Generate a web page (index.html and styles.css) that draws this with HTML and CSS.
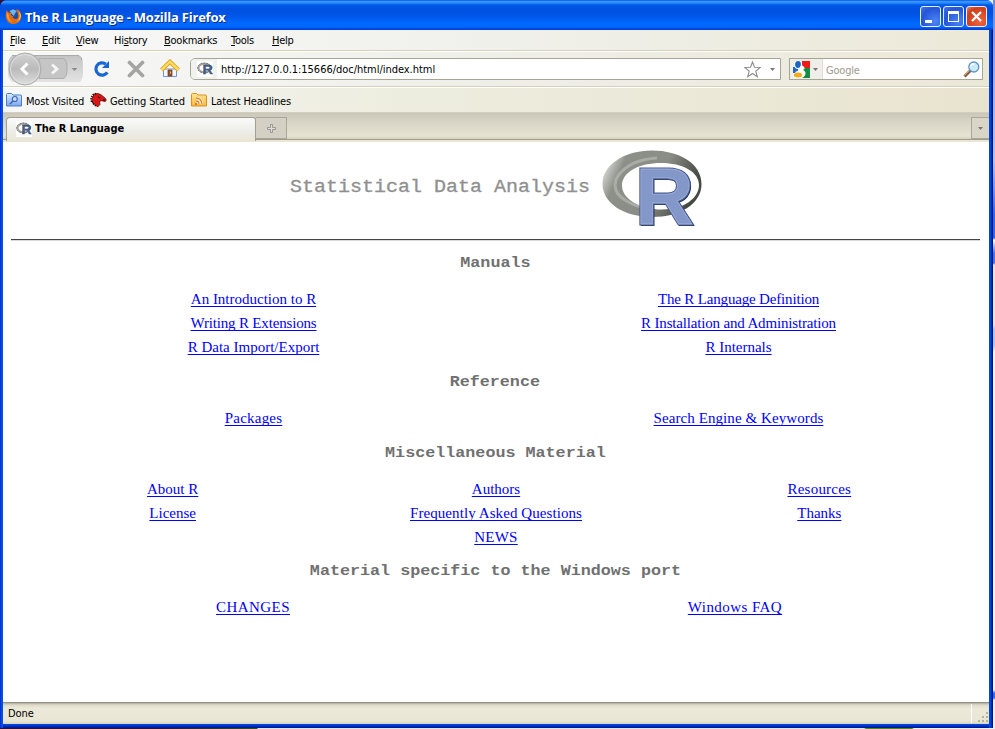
FILE: index.html
```html
<!DOCTYPE html>
<html lang="en">
<head>
<meta charset="utf-8">
<title>The R Language - Mozilla Firefox</title>
<link rel="stylesheet" href="styles.css">
</head>
<body>
<svg width="0" height="0" class="defs">
  <defs>
    <linearGradient id="ring" x1="0" y1="0" x2="1" y2=".3"><stop offset="0" stop-color="#777a72"/><stop offset=".12" stop-color="#c8cbc5"/><stop offset=".25" stop-color="#8d9088"/><stop offset=".65" stop-color="#8a8d85"/><stop offset="1" stop-color="#474a43"/></linearGradient>
    <linearGradient id="glass" x1="0" y1="0" x2="0" y2="1"><stop offset="0" stop-color="#d2d3d2"/><stop offset=".5" stop-color="#b9bab9"/><stop offset="1" stop-color="#dddedd"/></linearGradient>
    <linearGradient id="plate" x1="0" y1="0" x2="0" y2="1"><stop offset="0" stop-color="#c3c4c3"/><stop offset="1" stop-color="#e2e3e2"/></linearGradient>
    <linearGradient id="folder" x1="0" y1="0" x2="0" y2="1"><stop offset="0" stop-color="#dceafc"/><stop offset="1" stop-color="#7ba8e8"/></linearGradient>
    <linearGradient id="feed" x1="0" y1="0" x2="0" y2="1"><stop offset="0" stop-color="#ffe88e"/><stop offset="1" stop-color="#fbb63c"/></linearGradient>
    <symbol id="r-mini" viewBox="0 0 16 16">
      <path d="M0 0h16v16H0z" fill="#fff"/>
      <ellipse cx="7.500" cy="7" rx="6" ry="4.300" fill="none" stroke="#a3a6a2" stroke-width="2"/>
      <ellipse cx="7.500" cy="7" rx="7" ry="5" fill="none" stroke="#424641" stroke-width=".6" stroke-dasharray="2 1"/>
      <text x="5.500" y="13.400" class="r-mini-letter" textLength="10" lengthAdjust="spacingAndGlyphs">R</text>
    </symbol>
  </defs>
</svg>
<div class="desktop">
  <div class="window">
    <header class="titlebar">
      <svg class="fox" width="17" height="17" viewBox="0 0 17 17"><circle cx="8.500" cy="8.300" r="7" fill="#234ba0"/><path d="M4.500 3 8 1.200l4 1.800-2 2.200L9 8 6.800 6z" fill="#70b8e8"/><path d="M1.500 2.200 3.500 4.500l3.200.4L5.500 7l3 1.500-1.200 1.300 3 1.200c3 .2 3.500-3 2.300-6L11.400 1c5 1.400 6.200 8 3.300 12-3 4-9.500 4-12.200.2C.4 10.200.3 6 1.500 2.200z" fill="#e56b11"/><path d="M13.400 3.200c2.300 3.400 1.500 8.300-2.300 10.200 5.500-.8 6.300-7.500 2.300-10.200z" fill="#fbcb45"/><path d="M2 4.500c-1 4.500 1 8.800 5.600 9.600C4.800 12.500 3.500 10 3.800 7z" fill="#f9a12c"/></svg>
      <span class="window-title">The R Language - Mozilla Firefox</span>
      <div class="controls">
        <span class="control"><svg width="19" height="19"><path d="M4 13h7v3H4z" fill="#fff"/></svg></span>
        <span class="control"><svg width="19" height="19"><path d="M4 4h11v11H4zM5 7v7h9V7z" fill="#fff" fill-rule="evenodd"/></svg></span>
        <span class="control close"><svg width="19" height="19"><path d="m5 5 9 9m0-9-9 9" stroke="#fff" stroke-width="2.300"/></svg></span>
      </div>
    </header>
    <nav class="menu ui"><span><u>F</u>ile</span><span><u>E</u>dit</span><span><u>V</u>iew</span><span>Hi<u>s</u>tory</span><span><u>B</u>ookmarks</span><span><u>T</u>ools</span><span><u>H</u>elp</span></nav>
    <div class="navbar">
      <svg class="history" width="78" height="34" viewBox="0 0 78 34"><path d="M7 3.500h67q4 3 4 9v9q0 5-3 8.500H7q-4-3-4-9V12q0-5 4-8.500z" fill="url(#plate)"/><path d="M7 3.500h67q3 2 3 5" stroke="#9e9f9d" stroke-width=".8" fill="none"/><path d="M34 6.500h25q3 3 3 7v6q0 4-3 7H34z" fill="#c4c5c4" stroke="#adaead"/><circle cx="20" cy="17" r="16" fill="url(#glass)" stroke="#acacac"/><circle cx="20" cy="17" r="14.500" fill="none" stroke="#e4e4e4" opacity=".7"/><path d="m22.500 11.500-5.500 5.500 5.500 5.500" fill="none" stroke="#fff" stroke-width="3"/><path d="m47 12.500 5 4.500-5 4.500" fill="none" stroke="#f5f5f5" stroke-width="2.800"/><path d="M66.500 16h6l-3 3z" fill="#8b8c8b"/></svg>
      <svg class="reload" width="18" height="18" viewBox="0 0 18 18"><path d="M14.300 12.400A6.200 6.200 0 1 1 12.800 4" fill="none" stroke="#1766d4" stroke-width="3.200"/><path d="M9 8h7V1z" fill="#1766d4"/></svg>
      <svg class="stop" width="18" height="18" viewBox="0 0 18 18"><path d="m2.500 2.500 13 13m0-13-13 13" stroke="#a4a4a2" stroke-width="3.700" stroke-linecap="round"/></svg>
      <svg class="home" width="20" height="19" viewBox="0 0 20 19"><path d="M3.500 10h13v7.500h-13z" fill="#f3f7ff" stroke="#7694ce"/><path d="M1.500 11 10 2.700l8.500 8.300" fill="none" stroke="#d99a1f" stroke-width="4"/><path d="M1.500 11 10 2.700l8.500 8.300" fill="none" stroke="#ffdc54" stroke-width="2.500"/><path d="M8 11h4v6H8z" fill="#99512d" stroke="#693c27" stroke-width=".7"/><path d="M10 12.500h1v2h-1z" fill="#f2c08e"/></svg>
      <div class="address ui">
        <span class="site"><svg width="16" height="16"><use href="#r-mini"/></svg></span>
        <span class="url">http://127.0.0.1:15666/doc/html/index.html</span>
        <svg class="star" width="17" height="17" viewBox="0 0 17 17"><path d="m8.500 1 2 5.200 5.700.3-4.400 3.600 1.500 5.600-4.800-3.200-4.800 3.200 1.500-5.600L.8 6.500l5.700-.3z" fill="#fff" stroke="#8c8c8c" stroke-width="1.100"/></svg>
        <svg class="drop" width="5" height="3"><path d="M0 0h5L2.500 3z" fill="#777"/></svg>
      </div>
      <div class="search ui">
        <span class="engine"><svg width="17" height="17" viewBox="0 0 17 17"><path d="M9 0h8v7H9z" fill="#ee1b16"/><path d="M9 7h8v10H8z" fill="#178b41"/><path d="M0 6h5v6H0z" fill="#2467ca"/><path d="M0 12h7v5H0z" fill="#fff"/><ellipse cx="5" cy="3.500" rx="3.500" ry="4" fill="#1b62c8" stroke="#fff" stroke-width="1.200"/><path d="M8 4c5 2 4 4 2 5 4 2 3 6-1 8H6l-4-6 5-2z" fill="#fff"/><ellipse cx="5" cy="14" rx="4.200" ry="2.500" fill="#f2ac18"/></svg><svg width="5" height="3"><path d="M0 0h5L2.500 3z" fill="#777"/></svg></span>
        <span class="placeholder">Google</span>
        <svg width="17" height="17" viewBox="0 0 17 17"><path d="m7.500 9.500-6 6" stroke="#875d3f" stroke-width="3"/><path d="m6.500 9.500-5 5" stroke="#e0a060" stroke-width="1"/><circle cx="10.800" cy="6" r="5" fill="#c9e9fc" stroke="#5f94c4" stroke-width="1.300"/><path d="M7.500 5.500q1-3 4-2.700" fill="none" stroke="#fff" stroke-width="1.500"/></svg>
      </div>
    </div>
    <div class="bookmarks ui">
      <svg width="16" height="16" viewBox="0 0 16 16"><path d="M.5 2.500q0-1 1-1h4l1.500 1.500h7.500q1 0 1 1v10H.5z" fill="url(#folder)" stroke="#4c7ccb"/><circle cx="8.800" cy="7" r="2.500" fill="#c7defb" stroke="#3c66ba" stroke-width="1.200"/><path d="m7 9-3 3" stroke="#3c66ba" stroke-width="1.600"/></svg>
      <span class="most">Most Visited</span>
      <svg width="17" height="17" viewBox="0 0 17 17"><path d="M4.500 2 8 1.500l3 1.300 4 3.200 1.300 2-1 1.500-4-.8-1.800.8.500 3-2.500 2.500-2-2.500-2-.5L2 9l.5-4z" fill="#d91714" stroke="#650a0a" stroke-width=".8"/><path d="M1.500 10 1 6l2-3.500L6 1.500M2 9l1.500 3 3 2.500" fill="none" stroke="#290707" stroke-width="1.500" stroke-dasharray="1.500 1"/><path d="m8 5 2 1m3 2 2 0" stroke="#2d0805" stroke-width="1.200"/></svg>
      <span class="getting">Getting Started</span>
      <svg width="16" height="16" viewBox="0 0 16 16"><path d="M.5 2.500q0-1 1-1h4l1.500 1.500h7.500q1 0 1 1v10H.5z" fill="url(#feed)" stroke="#d79024"/><path d="M5 6q5 0 6 6M5 9q3 0 3 3" fill="none" stroke="#fff" stroke-width="2.700"/><path d="M5 6q5 0 6 6M5 9q3 0 3 3" fill="none" stroke="#e47a18" stroke-width="1.300"/><path d="M4 11h2v2H4z" fill="#e47a18"/></svg>
      <span class="latest">Latest Headlines</span>
    </div>
    <div class="tabs ui">
      <div class="tab"><svg width="16" height="16"><use href="#r-mini"/></svg><span>The R Language</span></div>
      <span class="new-tab"><svg width="9" height="9"><path d="M3.500.5h2v3h3v2h-3v3h-2v-3h-3v-2h3z" fill="#ddd" stroke="#8b8b86" stroke-width=".8"/></svg></span>
      <span class="tab-list"><svg width="5" height="3"><path d="M0 0h5L2.500 3z" fill="#777"/></svg></span>
    </div>
    <main class="page">
      <h1><span>Statistical Data Analysis</span>
        <svg class="r-large" width="102" height="78" viewBox="0 0 102 78"><path fill="url(#ring)" fill-rule="evenodd" d="M51 .500c-28 0-49.500 14.500-49.500 33.500S23 67 51 67s49.500-13 49.500-33S79 .500 51 .500zM60 13c22 0 38 9 38 22S83 59.500 61 59.500 21 49 21 35.500 38 13 60 13z"/><path d="M40 57C17 50 9 39 17 26 25 15 38 9 56 8" fill="none" stroke="#dfe3dc" stroke-width="3" opacity=".35"/>
        <g class="r-logo"><text x="35.500" y="75" fill="#202c49" stroke="#202c49" stroke-width="2" textLength="58" lengthAdjust="spacingAndGlyphs">R</text><text x="34.500" y="74" fill="#8397c8" stroke="#4b5d91" stroke-width="3" textLength="58" lengthAdjust="spacingAndGlyphs">R</text><text x="34.500" y="74" fill="#8397c8" stroke="#9fb0d9" stroke-width=".8" textLength="58" lengthAdjust="spacingAndGlyphs">R</text></g></svg>
      </h1>
      <hr>
      <h2><span>Manuals</span></h2>
      <div class="links two">
        <a href="#">An Introduction to R</a><a href="#" class="tight">The R Language Definition</a>
        <a href="#" class="tight">Writing R Extensions</a><a href="#" class="tight">R Installation and Administration</a>
        <a href="#">R Data Import/Export</a><a href="#">R Internals</a>
      </div>
      <h2><span>Reference</span></h2>
      <div class="links two"><a href="#" class="loose">Packages</a><a href="#" class="slack">Search Engine &amp; Keywords</a></div>
      <h2><span>Miscellaneous Material</span></h2>
      <div class="links three">
        <a href="#">About R</a><a href="#">Authors</a><a href="#" class="loose">Resources</a>
        <a href="#">License</a><a href="#" class="slack">Frequently Asked Questions</a><a href="#">Thanks</a>
        <a href="#" class="middle loose">NEWS</a>
      </div>
      <h2 class="port"><span>Material specific to the Windows port</span></h2>
      <div class="links port-links"><a href="#" class="wide">CHANGES</a><a href="#" class="wide">Windows FAQ</a></div>
    </main>
    <footer class="status ui"><span>Done</span><span class="grip"><svg width="17" height="18"><path d="M14 8h2v2h-2zM10 12h2v2h-2zM14 12h2v2h-2zM6 16h2v2H6zM10 16h2v2h-2zM14 16h2v2h-2z" fill="#b5b19d"/></svg></span></footer>
  </div>
  <div class="behind"></div>
</div>
</body>
</html>
```

FILE: styles.css
```css
* { box-sizing: border-box; }
body { margin: 0; overflow: hidden; background: #fff; }
svg { display: block; flex-shrink: 0; }
.defs { position: absolute; }
.desktop { width: 995px; height: 729px; display: flex; background: linear-gradient(90deg, #311038 0 160px, #345013 257px, #dce5fc 258px 864px, #58830e 866px 912px, #eef2fc 914px); }
.window {
  width: 993px; height: 728px; display: flex; flex-direction: column;
  padding: 0 4px 4px 3px; border-radius: 7px 7px 0 0;
  background:
    linear-gradient(90deg, #0023c8, #0059ee 2px, #0048e0 3px, transparent 3px calc(100% - 4px), #0044dc calc(100% - 4px), #0048e0 calc(100% - 2px), #00138c calc(100% - 1px)),
    linear-gradient(#0045e0 calc(100% - 3px), #0030bd calc(100% - 2px), #00138c);
}
.behind { width: 2px; height: 728px; background: linear-gradient(#6489df, #95b4f5 90px, #acc4ff 160px, #2b68e8 215px 238px, #fff 240px, #4773df 253px 263px, #e9e3cf 265px 325px, #abc6f7 330px 345px, #f0f4fc 352px 690px, #2b6ff0 693px 698px, #eee 700px); }
.ui { font: 11px/14px "DejaVu Sans Condensed", "DejaVu Sans", sans-serif; font-stretch: condensed; color: #000; white-space: nowrap; letter-spacing: -.35px; }
.titlebar {
  height: 30px; flex-shrink: 0; margin: 0 -4px 0 -3px; padding: 0 6px 0 5px;
  border-radius: 7px 7px 0 0; display: flex; align-items: center;
  background: linear-gradient(#0054e8 0, #3c95ff 1.500px, #268aff 3px, #0058e6 5px, #0051df 9px, #0056e8 16px, #0068ff 23px, #0068ff 27px, #0037cb 30px);
}
.fox { margin-top: 2px; }
.window-title { margin: 4px 0 0 3px; font: bold 13px/18px "Open Sans", "Noto Sans", sans-serif; letter-spacing: -.22px; color: #fff; text-shadow: 1px 1px #062c93; white-space: nowrap; }
.controls { display: flex; gap: 2px; margin: 3px 0 0 auto; }
.control { width: 21px; height: 21px; border: 1px solid #e9effe; border-radius: 3px; background: radial-gradient(circle at 75% 75%, #4c84f5, #2455d8 65%, #4876df); }
.close { background: radial-gradient(circle at 70% 75%, #ee6540, #ce3e1b 70%, #e58066); }
.menu { height: 22px; flex-shrink: 0; padding: 4px 7px 0; display: grid; grid-template-columns: 32px 34px 38px 50px 67px 41px 40px; background: linear-gradient(90deg, #f8f9f9, #f0f0eb 50%, #ece9d8); border-bottom: 1px solid #fff; box-shadow: inset 0 -1px #d6d0b9; letter-spacing: -.25px; }
.menu u { text-underline-offset: 1px; }
.navbar { height: 36px; flex-shrink: 0; padding-right: 6px; display: flex; align-items: center; background: linear-gradient(90deg, #f7f8f8, #efefe9 50%, #ece8d8); border-bottom: 1px solid #fff; box-shadow: inset 0 -1px #d6d0b9; }
.history { margin: -2px 0 0 2px; }
.reload { margin: -2px 0 0 10px; }
.stop { margin: -2px 0 0 16px; }
.home { margin: -2px 0 0 15px; }
.address { width: 591px; height: 22px; margin: -1px 0 0 10px; display: flex; align-items: center; background: #fff; border: 1px solid #a7a696; border-radius: 5px 0 0 5px; }
.site { width: 26px; height: 20px; padding: 2px 0 0 6px; border-radius: 4px 0 0 4px; background: #f1f1ed; }
.url { margin: 2px 0 0 4px; letter-spacing: -.03px; }
.star { margin-left: auto; }
.drop { margin: 1px 5px 0 9px; }
.search { width: 194px; height: 22px; margin: -1px 0 0 8px; padding-right: 2px; display: flex; align-items: center; background: #fff; border: 1px solid #a7a696; }
.engine { width: 33px; height: 20px; padding-left: 3px; display: flex; gap: 3px; align-items: center; background: #efeee9; border-right: 1px solid #ddd; }
.placeholder { margin: 3px auto 0 3px; color: #9d9a8e; letter-spacing: -.2px; }
.bookmarks { height: 24px; flex-shrink: 0; padding: 0 3px; display: flex; align-items: center; background: linear-gradient(90deg, #f6f7f7, #ededdf 40%, #e9e4d0); letter-spacing: -.17px; }
.bookmarks span { padding-top: 3px; }
.most { width: 64px; margin-left: 4px; }
.getting { width: 81px; margin-left: 3px; letter-spacing: -.1px; }
.latest { margin-left: 4px; }
.tabs { height: 30px; flex-shrink: 0; padding: 4px 0 0 3px; display: flex; background: linear-gradient(#cac6b8, #d8d5c6 9px, #e6e3d3 23px, #d5d1c0 26px, #9e9d8e 26px 27px, #e9e6d5 27px 29px, #a7a596 29px); border-top: 1px solid #d3cebd; }
.tab { width: 250px; height: 24px; padding: 0 0 1px 9px; display: flex; align-items: center; border: 1px solid #a09f91; border-bottom: 0; border-radius: 4px 3px 0 0; font-weight: bold; background: linear-gradient(#fafafa, #eeeeea 12px, #e9e6d6); letter-spacing: -.03px; }
.tab span { margin: 0 0 0 3px; }
.new-tab { width: 31px; height: 22px; display: grid; place-items: center; border: 1px solid #a9a799; border-left: 0; background: #d4d1c4; }
.tab-list { width: 18px; height: 22px; margin-left: auto; display: grid; place-items: center; border: 1px solid #a9a799; border-right: 0; background: #d9d6c8; }
.page { flex: 1; padding: 8px; background: #fff; text-align: center; font-family: "Liberation Serif", serif; width: 986px; }
h1 { height: 78px; margin: 0; display: flex; justify-content: center; gap: 11px; font: 18px/24px "Liberation Mono", monospace; color: #909090; }
h1 span { margin-top: 25px; width: 300px; text-align: left; white-space: nowrap; transform: scaleX(1.111); transform-origin: left; -webkit-text-stroke: .3px #909090; }
.r-large { overflow: visible; }
hr { width: 969px; height: 2px; margin: 11px 0 13px; border: 0; border-top: 1px solid #444; border-bottom: 1px solid #d9d9d6; }
h2 { margin: 0 0 15px; height: 18px; font: bold 14px/18px "Liberation Mono", monospace; color: #707070; padding-right: 2px; }
h2 span { display: inline-block; transform: scaleX(1.194); }
.links { display: grid; justify-items: center; margin-bottom: 14px; font-size: 15px; line-height: 24px; }
.two { grid-template-columns: repeat(2, 1fr); }
.three { grid-template-columns: repeat(3, 1fr); }
.port { margin-top: -1px; }
.port-links { grid-template-columns: 484px 480px; }
.middle { grid-column: 2; }
.tight { letter-spacing: -.17px; }
.slack { letter-spacing: .08px; }
.loose { letter-spacing: .23px; }
.wide { letter-spacing: .43px; }
a { color: #00f; text-decoration: underline; text-underline-offset: 2px; text-decoration-skip-ink: none; text-decoration-thickness: 1px; }
.status { height: 22px; flex-shrink: 0; padding-left: 5px; display: flex; justify-content: space-between; background: linear-gradient(#b0ad9e, #dfdac8 2px, #ece9d8 5px, #e9e6d5 18px, #d6d3ba); border-top: 1px solid #929184; }
.status > span:first-child { margin-top: 4px; letter-spacing: -.1px; }
.grip { width: 18px; height: 19px; margin-top: 1px; border-left: 1px solid #fff; }
.r-mini-letter { font: bold 13px "Liberation Sans", sans-serif; fill: #49618f; stroke: #2b3960; stroke-width: .3px; }
.r-logo { font: bold 79px "Liberation Sans", sans-serif; }
```
